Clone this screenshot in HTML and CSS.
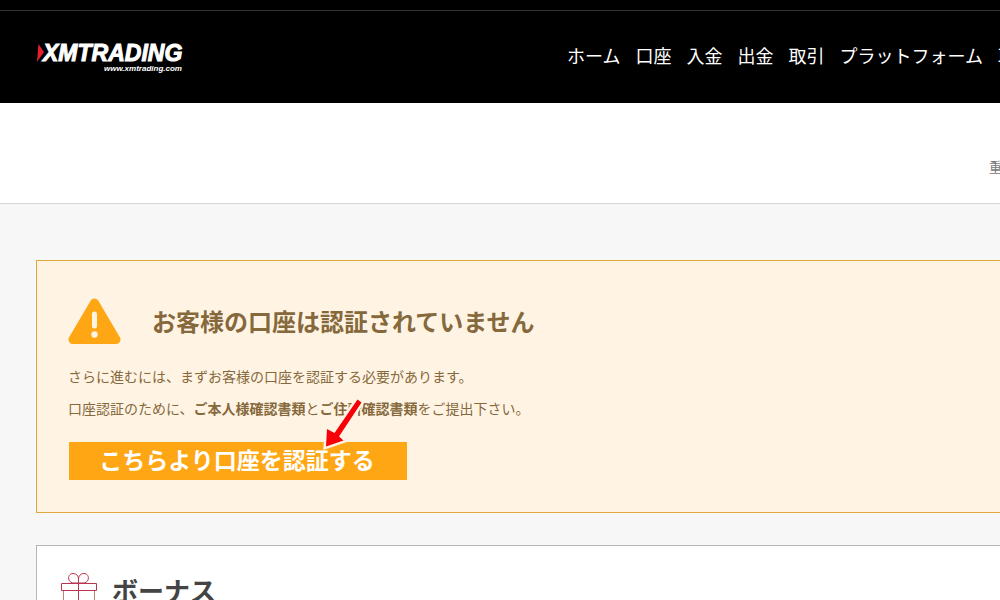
FILE: index.html
```html
<!DOCTYPE html>
<html lang="ja">
<head>
<meta charset="utf-8">
<title>XMTrading</title>
<link rel="stylesheet" href="styles.css">
</head>
<body>
<header class="site-header">
  <a class="logo" href="#" aria-label="XMTRADING">
    <svg class="logo-image" viewBox="0 0 150 32">
      <path d="M2.500 3l5.500 8-7 10z" fill="#e3202b"/>
      <text class="logo-name" x="7" y="20">XMTRADING</text>
      <text class="logo-url" x="68" y="30">www.xmtrading.com</text>
    </svg>
  </a>
  <nav class="main-nav">
    <a href="#">ホーム</a>
    <a href="#">口座</a>
    <a href="#">入金</a>
    <a href="#">出金</a>
    <a href="#">取引</a>
    <a href="#">プラットフォーム</a>
    <a href="#">取引</a>
  </nav>
</header>
<div class="notice-bar"><span class="notice">重</span></div>
<main class="content">
  <section class="alert">
    <div class="alert-head">
      <svg class="alert-icon" viewBox="0 0 54 48">
        <path d="M26.500 6L5 42.500h43z" fill="#ffa614" stroke="#ffa614" stroke-width="9" stroke-linejoin="round"/>
        <path d="M26.500 17v12" stroke="#fff3e2" stroke-width="5" stroke-linecap="round"/>
        <circle cx="26.500" cy="37.500" r="3.200" fill="#fff3e2"/>
      </svg>
      <h1 class="alert-title">お客様の口座は認証されていません</h1>
    </div>
    <p class="alert-text">さらに進むには、まずお客様の口座を認証する必要があります。</p>
    <p class="alert-text">口座認証のために、<strong>ご本人様確認書類</strong>と<strong>ご住所確認書類</strong>をご提出下さい。</p>
    <div class="action">
      <button class="verify-button" type="button">こちらより口座を認証する</button>
      <svg class="pointer" viewBox="0 0 46 56">
        <path d="M36.500 1.500L40.500 4.500L18 38.500L22.500 42.500L5 48.500L6 31L13.500 35z" fill="none" stroke="#fff4e3" stroke-width="5"/>
        <path d="M36.500 1.500L40.500 4.500L18 38.500L22.500 42.500L5 48.500L6 31L13.500 35z" fill="#f80008"/>
      </svg>
    </div>
  </section>
  <section class="bonus">
    <svg class="gift" viewBox="0 0 38 40" fill="none" stroke="#b8344f">
      <path d="M18.500 11v29M18.500 7v4H14c-7 0-7-9.500-1-9.500 3.500 0 5.500 2.500 5.500 5.500 0-3 2-5.500 5.500-5.500 6 0 6 9.500-1 9.500h-4.500"/>
      <path d="M1.500 11.500h35v7h-35z"/>
      <path d="M3.500 19v20h31V19" stroke="#c9806b"/>
    </svg>
    <h2 class="bonus-title">ボーナス</h2>
  </section>
</main>
</body>
</html>
```

FILE: styles.css
```css
* { box-sizing: border-box; }
body {
  margin: 0;
  overflow: hidden;
  background: #f7f7f7;
  font-family: "Noto Sans CJK JP", sans-serif;
}
h1, h2, p { margin: 0; }
.site-header {
  display: flex;
  align-items: center;
  height: 103px;
  padding: 10px 0 0 36px;
  background: linear-gradient(#000 10px, #303030 10px, #303030 11px, #000 11px);
}
.logo { flex: none; width: 150px; }
.logo-image { display: block; width: 150px; height: 32px; overflow: visible; }
.logo-name {
  font: italic bold 23px "Liberation Sans", sans-serif;
  fill: #fff;
  stroke: #fff;
  stroke-width: 1px;
}
.logo-url {
  font: italic bold 8px "Liberation Sans", sans-serif;
  fill: #fff;
}
.main-nav {
  display: flex;
  gap: 15px;
  margin-left: 381px;
  padding-bottom: 4px;
  white-space: nowrap;
}
.main-nav a {
  color: #fff;
  font-size: 18px;
  line-height: 28px;
  text-decoration: none;
}
.notice-bar {
  display: flex;
  justify-content: flex-end;
  height: 101px;
  padding-top: 54px;
  border-bottom: 1px solid #d6d6d6;
  background: #fff;
}
.notice {
  width: 11px;
  color: #777;
  font-size: 13px;
  line-height: 20px;
}
.content {
  display: flex;
  flex-direction: column;
  gap: 32px;
  padding: 56px 0 0 36px;
}
.alert {
  padding: 32px 31px 32px;
  border: 1px solid #e0a83c;
  border-right: 0;
  background: #fff4e3;
  color: #86683d;
}
.alert-head {
  display: flex;
  align-items: center;
  gap: 30px;
  height: 56px;
  margin-bottom: 11px;
}
.alert-icon { width: 54px; height: 48px; }
.alert-title { font-size: 24px; line-height: 36px; }
.alert-text { font-size: 14px; line-height: 32px; }
.action {
  position: relative;
  width: 338px;
  margin: 18px 0 0 1px;
}
.verify-button {
  display: block;
  width: 100%;
  height: 38px;
  padding: 0 2px 4px 0;
  border: 0;
  background: #ffa614;
  color: #fff;
  font: bold 23px/34px "Noto Sans CJK JP", sans-serif;
}
.pointer {
  position: absolute;
  top: -44px;
  left: 252px;
  width: 46px;
  height: 56px;
  overflow: visible;
}
.bonus {
  display: flex;
  gap: 14px;
  padding: 26px 23px;
  border: 1px solid #b5b5b5;
  border-right: 0;
  background: #fff;
  color: #444;
}
.gift { width: 38px; height: 40px; }
.bonus-title { font-size: 26px; line-height: 36px; }
```
